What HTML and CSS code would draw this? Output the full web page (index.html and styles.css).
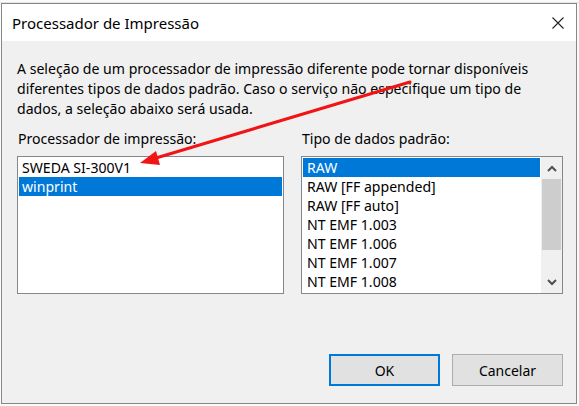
FILE: index.html
```html
<!DOCTYPE html>
<html lang="pt">
<head>
<meta charset="utf-8">
<title>Processador de Impressão</title>
<link rel="stylesheet" href="styles.css">
</head>
<body>
<div class="backdrop"></div>
<div class="window">
  <div class="titlebar">
    <span class="title">Processador de Impressão</span>
    <svg class="close" width="12" height="12" viewBox="0 0 12 12"><path d="M0.5 0.5L11.5 11.5M11.5 0.5L0.5 11.5" stroke="#222" stroke-width="1.1" fill="none"/></svg>
  </div>
  <div class="content">
    <p class="desc">A seleção de um processador de impressão diferente pode tornar disponíveis diferentes tipos de dados padrão. Caso o serviço não especifique um tipo de dados, a seleção abaixo será usada.</p>
    <div class="columns">
      <div class="col col-left">
        <div class="label">Processador de impressão:</div>
        <div class="listbox">
          <div class="item">SWEDA SI-300V1</div>
          <div class="item selected">winprint</div>
        </div>
      </div>
      <div class="col col-right">
        <div class="label">Tipo de dados padrão:</div>
        <div class="listbox with-scroll">
          <div class="items">
            <div class="item selected">RAW</div>
            <div class="item">RAW [FF appended]</div>
            <div class="item">RAW [FF auto]</div>
            <div class="item">NT EMF 1.003</div>
            <div class="item">NT EMF 1.006</div>
            <div class="item">NT EMF 1.007</div>
            <div class="item">NT EMF 1.008</div>
          </div>
          <div class="scrollbar">
            <div class="sb-arrow"><svg width="10" height="7" viewBox="0 0 10 7"><path d="M1 6L5 2L9 6" stroke="#505050" stroke-width="2" fill="none"/></svg></div>
            <div class="sb-track"><div class="sb-thumb"></div></div>
            <div class="sb-arrow"><svg width="10" height="7" viewBox="0 0 10 7"><path d="M1 1L5 5L9 1" stroke="#505050" stroke-width="2" fill="none"/></svg></div>
          </div>
        </div>
      </div>
    </div>
  </div>
  <div class="buttons">
    <button class="btn btn-default">OK</button>
    <button class="btn">Cancelar</button>
  </div>
  <svg class="annotation" width="579" height="406" viewBox="0 0 579 406">
    <line x1="410" y1="82" x2="156" y2="158" stroke="#f01414" stroke-width="3" stroke-linecap="round"/>
    <polygon points="140,163 156,151 160,165" fill="#f01414"/>
  </svg>
</div>
</body>
</html>
```

FILE: styles.css
```css
* { box-sizing: border-box; }
html, body { margin: 0; padding: 0; }
body {
  background: #fbfbfb;
  font-family: "Noto Sans", "Liberation Sans", sans-serif;
  font-size: 14.1px;
  color: #000;
  width: 579px;
  height: 406px;
  overflow: hidden;
  position: relative;
}
.backdrop {
  height: 3px;
  border-bottom: 1px solid #e4e4e4;
}
.window {
  position: absolute;
  top: 3px;
  left: 1px;
  width: 576px;
  height: 401px;
  border: 1px solid #888;
  background: #f0f0f0;
  display: flex;
  flex-direction: column;
}
.titlebar {
  height: 37px;
  background: #fff;
  display: flex;
  align-items: center;
  justify-content: space-between;
  padding: 0 12px 0 10px;
  flex: none;
}
.title { font-size: 15px; }
.content {
  padding: 18px 13px 0 15px;
}
.desc {
  margin: 0;
  line-height: 20px;
}
.columns {
  display: flex;
  gap: 17px;
  margin-top: 10px;
}
.col-left { width: 268px; }
.col-right { width: 263px; }
.label {
  line-height: 20px;
  padding-left: 1px;
  margin-bottom: 7px;
}
.listbox {
  height: 138px;
  background: #fff;
  border: 1px solid #828790;
  padding: 1px;
}
.item {
  height: 19px;
  line-height: 19px;
  padding-left: 3px;
  white-space: nowrap;
}
.item.selected {
  background: #0078d7;
  color: #fff;
}
.with-scroll {
  display: flex;
  padding: 0;
}
.with-scroll .items {
  flex: 1;
  padding: 1px 1px 0 1px;
  overflow: hidden;
}
.with-scroll .item { padding-left: 4px; }
.scrollbar {
  width: 21px;
  background: #f0f0f0;
  display: flex;
  flex-direction: column;
}
.sb-arrow {
  height: 22px;
  display: flex;
  align-items: center;
  justify-content: center;
}
.sb-track {
  flex: 1;
  padding: 0 1px;
}
.sb-thumb {
  height: 71px;
  background: #cdcdcd;
}
.buttons {
  margin-top: auto;
  display: flex;
  justify-content: flex-end;
  gap: 12px;
  padding: 0 13px 17px 0;
}
.btn {
  width: 111px;
  height: 32px;
  background: #e1e1e1;
  border: 1px solid #adadad;
  font-family: inherit;
  font-size: 14px;
  color: #000;
  padding: 0;
}
.btn-default {
  border: 2px solid #0078d7;
}
.annotation {
  position: absolute;
  left: -2px;
  top: -4px;
  pointer-events: none;
}
```
